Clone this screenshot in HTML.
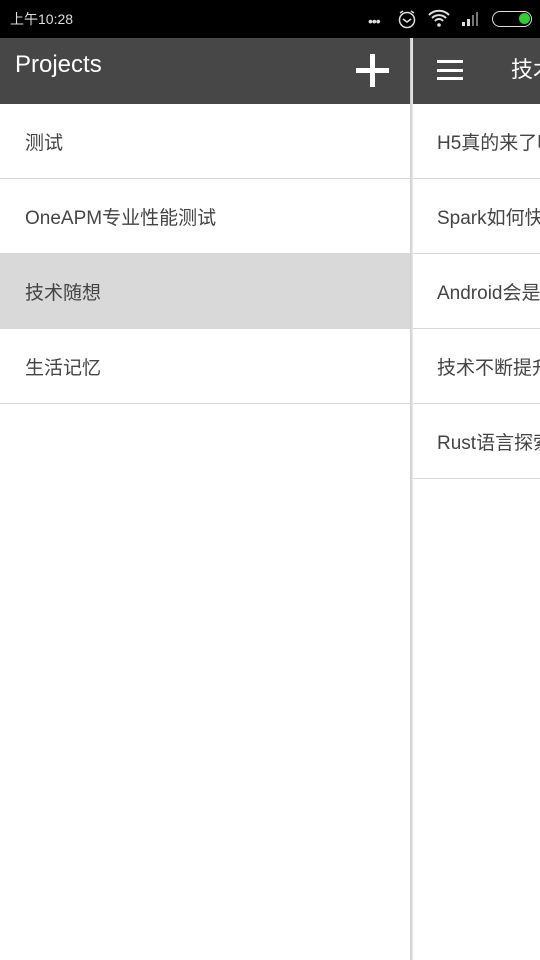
<!DOCTYPE html>
<html><head><meta charset="utf-8"><style>
*{margin:0;padding:0;box-sizing:border-box}
body{width:540px;height:960px;overflow:hidden;background:#fff;position:relative;font-family:"Liberation Sans","Noto Sans CJK SC",sans-serif;color:#444}
.sb{position:absolute;left:0;top:0;width:540px;height:38px;background:#000;color:#ddd;font-size:14px}
.hd{position:absolute;top:38px;height:66px;background:#474747;overflow:hidden}
.row{position:absolute;height:75px;border-bottom:1px solid #d8d8d8;font-size:19px;line-height:79px;white-space:nowrap;overflow:hidden}
</style></head><body>
<div class="sb"><span style="position:absolute;left:10px;top:9px">上午10:28</span>
<span style="position:absolute;left:368px;top:13px;font-size:14px;letter-spacing:-1px">•••</span>
<svg style="position:absolute;left:396px;top:8px" width="22" height="22" viewBox="0 0 22 22"><circle cx="11" cy="12" r="7.5" fill="none" stroke="#ddd" stroke-width="1.5"/><path d="M7 11l4 3 4-3M4 5l3-2M18 5l-3-2" stroke="#ddd" stroke-width="1.5" fill="none"/></svg>
<svg style="position:absolute;left:427px;top:8px" width="24" height="20" viewBox="0 0 24 20"><path d="M2 7a14 14 0 0 1 20 0M5 10a10 10 0 0 1 14 0M8 13a5 5 0 0 1 8 0" stroke="#ddd" stroke-width="2" fill="none"/><circle cx="12" cy="17" r="1.8" fill="#ddd"/></svg>
<svg style="position:absolute;left:462px;top:11px" width="22" height="16"><rect x="0" y="11" width="3" height="4" fill="#ddd"/><rect x="5" y="8" width="3" height="7" fill="#ddd"/><rect x="10" y="4" width="2" height="11" fill="#777"/><rect x="14" y="1" width="2" height="14" fill="#777"/></svg>
<div style="position:absolute;left:492px;top:11px;width:40px;height:16px;border:1.5px solid #ddd;border-radius:8px"><div style="position:absolute;right:1px;top:1px;width:11px;height:11px;border-radius:6px;background:#3c3"></div></div>
</div>
<div class="hd" style="left:0;width:411px"><span style="position:absolute;left:15px;top:13px;color:#fff;font-size:24px">Projects</span>
<div style="position:absolute;left:356px;top:30px;width:33px;height:5px;background:#fff"></div><div style="position:absolute;left:370px;top:16px;width:5px;height:33px;background:#fff"></div></div>
<div class="hd" style="left:413px;width:127px"><div style="position:absolute;left:24px;top:22px;width:26px;height:20px;border-top:3px solid #fff;border-bottom:3px solid #fff"><div style="margin-top:5.5px;height:3px;background:#fff"></div></div>
<span style="position:absolute;left:98px;top:14px;color:#fff;font-size:22px;white-space:nowrap">技术随想</span></div>
<div style="position:absolute;left:410px;top:38px;width:3px;height:922px;background:linear-gradient(90deg,#ccc,#e8e8e8)"></div>
<div class="row" style="left:0;top:104px;width:410px;padding-left:25px">测试</div>
<div class="row" style="left:0;top:179px;width:410px;padding-left:25px">OneAPM专业性能测试</div>
<div class="row" style="left:0;top:254px;width:410px;padding-left:25px;background:#d9d9d9">技术随想</div>
<div class="row" style="left:0;top:329px;width:410px;padding-left:25px">生活记忆</div>
<div class="row" style="left:413px;top:104px;width:127px;padding-left:24px">H5真的来了吗</div>
<div class="row" style="left:413px;top:179px;width:127px;padding-left:24px">Spark如何快速</div>
<div class="row" style="left:413px;top:254px;width:127px;padding-left:24px">Android会是</div>
<div class="row" style="left:413px;top:329px;width:127px;padding-left:24px">技术不断提升</div>
<div class="row" style="left:413px;top:404px;width:127px;padding-left:24px">Rust语言探索</div>
</body></html>
